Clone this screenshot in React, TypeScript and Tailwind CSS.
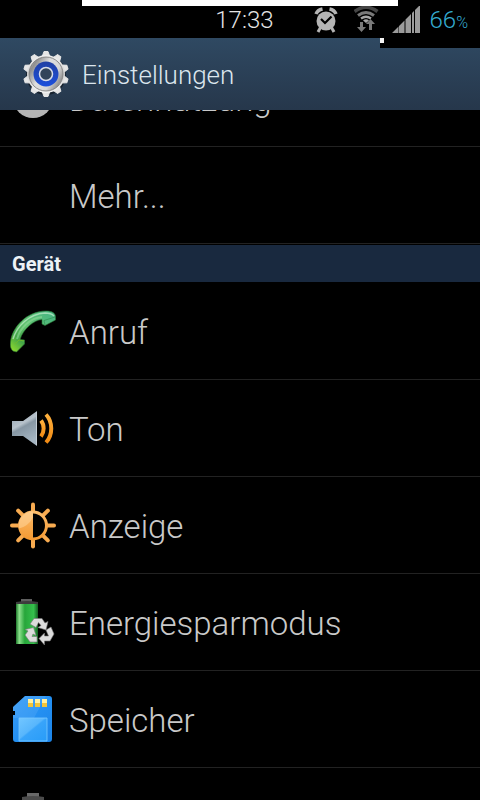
import type { ReactNode } from "react";

function AlarmIcon() {
  return (
    <svg width="24" height="27" viewBox="0 0 24 27" aria-hidden="true">
      <g stroke="#b4b4b4" strokeWidth="3" fill="none">
        <path d="M2 8 Q3.5 4 8.5 3" strokeWidth="3.5" />
        <path d="M22 8 Q20.5 4 15.5 3" strokeWidth="3.5" />
        <path d="M6.5 21.5 L4 26" />
        <path d="M17.5 21.5 L20 26" />
      </g>
      <circle cx="12" cy="15" r="9.5" fill="#b4b4b4" />
      <path d="M7 13 L11 17 L17.5 10.5" fill="none" stroke="#000" strokeWidth="2.2" />
    </svg>
  );
}

function WifiIcon() {
  return (
    <svg width="26" height="28" viewBox="0 0 26 28" aria-hidden="true">
      <g fill="none">
        <path d="M0.5 6.5 Q12 -2 23.5 6.5" stroke="#454545" strokeWidth="3.5" />
        <path d="M4 10.5 Q12 4.500 20 10.5" stroke="#7a7a7a" strokeWidth="3" />
        <path d="M7 13.5 Q12 10 17 13.500" stroke="#a6a6a6" strokeWidth="2.5" />
      </g>
      <path d="M9 15.5 Q12 13 15 15.5 L12 18 Z" fill="#a6a6a6" />
      <path d="M6 17 H9 V22 H12 L7.5 27 L3 22 H6 Z" fill="#7a7a7a" />
      <path d="M15 25 H18 V19 H21 L16.5 14 L12 19 H15 Z" fill="#7a7a7a" />
    </svg>
  );
}

function SignalIcon() {
  return (
    <svg width="28" height="28" viewBox="0 0 28 28" fill="#9b9b9b" aria-hidden="true">
      <path d="M0 28 L6.500 21.5 V28 Z M7 21 L12.5 15.5 V28 H7 Z M13.5 14.5 L19 9 V28 H13.5 Z M20 8 L22 6 V28 H20 Z M23 5 L27 1 H28 V28 H23 Z" />
    </svg>
  );
}

const teeth = [0, 36, 72, 108, 144, 180, 216, 252, 288, 324];

function GearIcon() {
  return (
    <svg width="48" height="48" viewBox="0 0 48 48" aria-hidden="true">
      <defs>
        <linearGradient id="gear" x1="0" y1="0" x2="0" y2="1">
          <stop offset="0" stopColor="#f0f0f0" />
          <stop offset="0.5" stopColor="#d4d4d4" />
          <stop offset="1" stopColor="#f4f4f4" />
        </linearGradient>
        <linearGradient id="plate" x1="0" y1="0.2" x2="1" y2="0.8">
          <stop offset="0" stopColor="#b9b9b9" />
          <stop offset="0.12" stopColor="#8f8f8f" />
          <stop offset="0.4" stopColor="#dedede" />
          <stop offset="0.7" stopColor="#d8d8d8" />
          <stop offset="0.9" stopColor="#959595" />
          <stop offset="1" stopColor="#c6c6c6" />
        </linearGradient>
        <linearGradient id="ring" x1="0" y1="0" x2="0" y2="1">
          <stop offset="0" stopColor="#2140a4" />
          <stop offset="1" stopColor="#1d50dc" />
        </linearGradient>
      </defs>
      <circle cx="24" cy="25" r="20" fill="#17222e" />
      {teeth.map((angle) => (
        <path key={angle} d="M20 7 L22 1.5 H26 L28 7 Z" fill="#e6e6e6" stroke="#e6e6e6" strokeLinejoin="round" transform={`rotate(${angle} 24 24)`} />
      ))}
      <circle cx="24" cy="24" r="19" fill="url(#gear)" />
      <circle cx="24" cy="24" r="17" fill="url(#plate)" stroke="#777" strokeWidth="0.8" />
      <circle cx="24" cy="24" r="12.5" fill="url(#ring)" />
      <circle cx="24" cy="24" r="6.5" fill="#32445a" stroke="#d8dde8" strokeWidth="1.5" />
    </svg>
  );
}

function DataIcon() {
  return (
    <svg width="46" height="46" viewBox="0 0 46 46" aria-hidden="true">
      <circle cx="23" cy="22" r="20" fill="#b5b5b5" />
      <path d="M23 22 V2 A20 20 0 0 1 43 22 Z" fill="#4b94d8" />
    </svg>
  );
}

function PhoneIcon() {
  return (
    <svg width="48" height="48" viewBox="0 0 48 48" aria-hidden="true">
      <defs>
        <linearGradient id="phone" x1="1" y1="0" x2="0" y2="1">
          <stop offset="0" stopColor="#45b486" />
          <stop offset="0.5" stopColor="#62c270" />
          <stop offset="0.75" stopColor="#43a548" />
          <stop offset="1" stopColor="#9be32a" />
        </linearGradient>
      </defs>
      <path
        d="M0.5 34 C2 19 17 3 36 3 C42 3 45.5 5 45.5 9 V12 L35 17.5 L32 16 V11.5 C24 12 13 21 10 31.5 L14.5 32 V36 L6.5 44 L3 43 C0.5 41 0 38 0.5 34 Z"
        fill="url(#phone)"
        stroke="#2c7a35"
        strokeWidth="0.6"
        strokeLinejoin="round"
      />
      <path d="M3 31 C7 18 19 6 35 5 C39 5 42 6 44 8" fill="none" stroke="#c3edcb" strokeWidth="1.5" opacity="0.7" />
      <path d="M7 31 C10 20 20 10 32 9" fill="none" stroke="#8edb96" strokeWidth="2" opacity="0.6" />
      <path d="M35 17 L34 12.5 L45 9" fill="none" stroke="#2a8a4c" opacity="0.6" />
      <path d="M5 36 L9 32 L14 33" fill="none" stroke="#6fb92c" />
    </svg>
  );
}

function SoundIcon() {
  return (
    <svg width="48" height="48" viewBox="0 0 48 48" aria-hidden="true">
      <defs>
        <linearGradient id="cone" x1="0" y1="0" x2="0.4" y2="1">
          <stop offset="0" stopColor="#8d9dab" />
          <stop offset="0.45" stopColor="#b7c2cb" />
          <stop offset="0.55" stopColor="#8797a4" />
          <stop offset="1" stopColor="#a5b5c2" />
        </linearGradient>
        <linearGradient id="waves" x1="0" y1="0" x2="0" y2="1">
          <stop offset="0" stopColor="#ffb13d" />
          <stop offset="1" stopColor="#f08a14" />
        </linearGradient>
      </defs>
      <path d="M2 16 H13 L27 6 V41 L13 31 H2 Z" fill="url(#cone)" />
      <path d="M26.5 7 V40" stroke="#c2ccd4" />
      <g fill="none" stroke="url(#waves)" strokeWidth="4">
        <path d="M31 15.5 C34.5 20 34.5 27 31 31.5" />
        <path d="M36 9.5 C43 17 43 30 36 37.5" />
      </g>
    </svg>
  );
}

const rays = [0, 45, 90, 135, 180, 225, 270, 315];

function DisplayIcon() {
  return (
    <svg width="48" height="48" viewBox="0 0 48 48" aria-hidden="true">
      <defs>
        <linearGradient id="sun" x1="0" y1="0" x2="0" y2="1">
          <stop offset="0" stopColor="#ffbd6b" />
          <stop offset="0.55" stopColor="#f7a84b" />
          <stop offset="1" stopColor="#f59a33" />
        </linearGradient>
      </defs>
      {rays.map((angle) => (
        <path key={angle} d="M23 2.5 V10" stroke="#f8ab50" strokeWidth="4" strokeLinecap="round" transform={`rotate(${angle} 23 23.5)`} />
      ))}
      <circle cx="23" cy="23.5" r="13.5" fill="#000" stroke="url(#sun)" strokeWidth="3" />
      <path d="M23 9.5 A14 14 0 0 0 23 37.5 Z" fill="url(#sun)" />
      <path d="M23 9.5 A14 14 0 0 0 9 26.5 Q18 24.5 23 15.5 Z" fill="#ffd9a3" opacity="0.5" />
    </svg>
  );
}

function PowerSavingIcon() {
  return (
    <svg width="48" height="48" viewBox="0 0 48 48" aria-hidden="true">
      <defs>
        <linearGradient id="cell" x1="0" y1="0" x2="1" y2="0">
          <stop offset="0" stopColor="#1f7a2c" />
          <stop offset="0.15" stopColor="#8ce08c" />
          <stop offset="0.4" stopColor="#27a63a" />
          <stop offset="0.8" stopColor="#35c04c" />
          <stop offset="1" stopColor="#146022" />
        </linearGradient>
      </defs>
      <rect x="11" y="0" width="11" height="4" fill="#5f5f5f" />
      <path d="M6 3 Q17 1 28 3 V6 H6 Z" fill="#3d3d3d" />
      <rect x="6" y="5" width="22" height="40" fill="url(#cell)" />
      <g fill="#dcdcdc" stroke="#777" strokeWidth="0.6" strokeLinejoin="round">
        <path d="M20 25 L24 19.5 H32 L35 24 L38 22.5 L36 31 L28 28.5 L31 26.5 L28.5 23.5 L26 28.5 Z" />
        <path d="M36 31 L41 28 L44 35 L40 42 H34.5 V46 L29 39.5 L34.5 34 V37 H38.5 Z" />
        <path d="M27 43 H20 L15 36 L18 32 L15 30.5 L23.5 28.5 L26 36.5 L23 35 L22 37.5 H27 Z" />
      </g>
    </svg>
  );
}

function StorageIcon() {
  return (
    <svg width="48" height="48" viewBox="0 0 48 48" aria-hidden="true">
      <defs>
        <linearGradient id="card" x1="0" y1="0" x2="1" y2="1">
          <stop offset="0" stopColor="#3c9df5" />
          <stop offset="0.5" stopColor="#2490f2" />
          <stop offset="1" stopColor="#1c84e8" />
        </linearGradient>
        <linearGradient id="label" x1="0" y1="0" x2="1" y2="1">
          <stop offset="0" stopColor="#72c6ff" />
          <stop offset="0.45" stopColor="#58b6fc" />
          <stop offset="0.5" stopColor="#38a4fa" />
          <stop offset="1" stopColor="#289cf8" />
        </linearGradient>
      </defs>
      <path d="M15 0 H39 Q42 0 42 3 V43 Q42 46 39 46 H6 Q3 46 3 43 V19 H5 V15 H3 V11 Z" fill="url(#card)" />
      <path d="M15 0 H36 L24 22 H3 V19 H5 V15 H3 V11 Z" fill="#6ab8fa" opacity="0.25" />
      <path d="M9 22 H37 V45 H9 Z" fill="url(#label)" stroke="#7bc9ff" strokeWidth="0.8" />
      <g fill="#fff0a0">
        <rect x="18" y="3" width="5" height="8" />
        <rect x="25" y="3" width="5" height="8" />
        <rect x="32" y="3" width="5" height="8" />
      </g>
      <path d="M18 7 H23 V11 H18 Z M25 7 H30 V11 H25 Z M32 7 H37 V11 H32 Z" fill="#f2c438" />
    </svg>
  );
}

function BatteryIcon() {
  return (
    <svg width="48" height="48" viewBox="0 0 48 48" aria-hidden="true">
      <rect x="17" y="0" width="12" height="4" fill="#686868" />
      <path d="M12 4 Q23 2 34 4 V8 H12 Z" fill="#4b4b4b" />
      <rect x="12" y="8" width="22" height="36" fill="#2fae42" />
    </svg>
  );
}

function Row({ icon, label }: { icon?: ReactNode; label?: string }) {
  return (
    <li className="border-b border-[#222222]">
      <button type="button" className="flex h-24 w-full items-center pl-[10px] text-left">
        <span className="flex w-[59px] shrink-0 pt-0.5">{icon}</span>
        {label && <span className="pt-1 text-[33px] leading-10 font-light text-[#c9c9c9]">{label}</span>}
      </button>
    </li>
  );
}

export default function App() {
  return (
    <div className="flex h-screen flex-col overflow-hidden bg-black font-[Roboto,sans-serif]">
      <div className="relative flex h-[38px] shrink-0 items-center justify-end bg-black pr-3">
        <div className="absolute top-0 right-[82px] left-[82px] h-[6px] bg-white" />
        <time className="mr-10 pt-px text-2xl font-light text-[#e6e6e6]">17:33</time>
        <span className="mr-4 pt-px"><AlarmIcon /></span>
        <span className="mr-3"><WifiIcon /></span>
        <span className="mr-[10px]"><SignalIcon /></span>
        <span className="pt-px text-2xl font-light text-[#35abd0]">
          66<span className="text-base">%</span>
        </span>
      </div>
      <header className="relative flex h-[72px] shrink-0 items-center bg-linear-to-b from-[#2f4962] to-[#26374b] pl-[22px]">
        <div className="absolute top-0 right-0 h-[10px] w-[100px] bg-black">
          <div className="h-[5px] w-1 bg-[#f4f4f4]" />
        </div>
        <GearIcon />
        <h1 className="pt-0.5 pl-3 text-[26px] leading-8 font-light text-[#dce6ee]">Einstellungen</h1>
      </header>
      <main className="min-h-0 flex-1 overflow-hidden">
        <ul className="-mt-[60px]">
          <Row icon={<DataIcon />} label="Datennutzung" />
          <Row label="Mehr..." />
        </ul>
        <h2 className="border-y border-black bg-[#19293f] pt-px pl-3 text-xl leading-9 font-bold text-[#edf2f7]">Gerät</h2>
        <ul>
          <Row icon={<PhoneIcon />} label="Anruf" />
          <Row icon={<SoundIcon />} label="Ton" />
          <Row icon={<DisplayIcon />} label="Anzeige" />
          <Row icon={<PowerSavingIcon />} label="Energiesparmodus" />
          <Row icon={<StorageIcon />} label="Speicher" />
          <Row icon={<BatteryIcon />} />
        </ul>
      </main>
    </div>
  );
}
